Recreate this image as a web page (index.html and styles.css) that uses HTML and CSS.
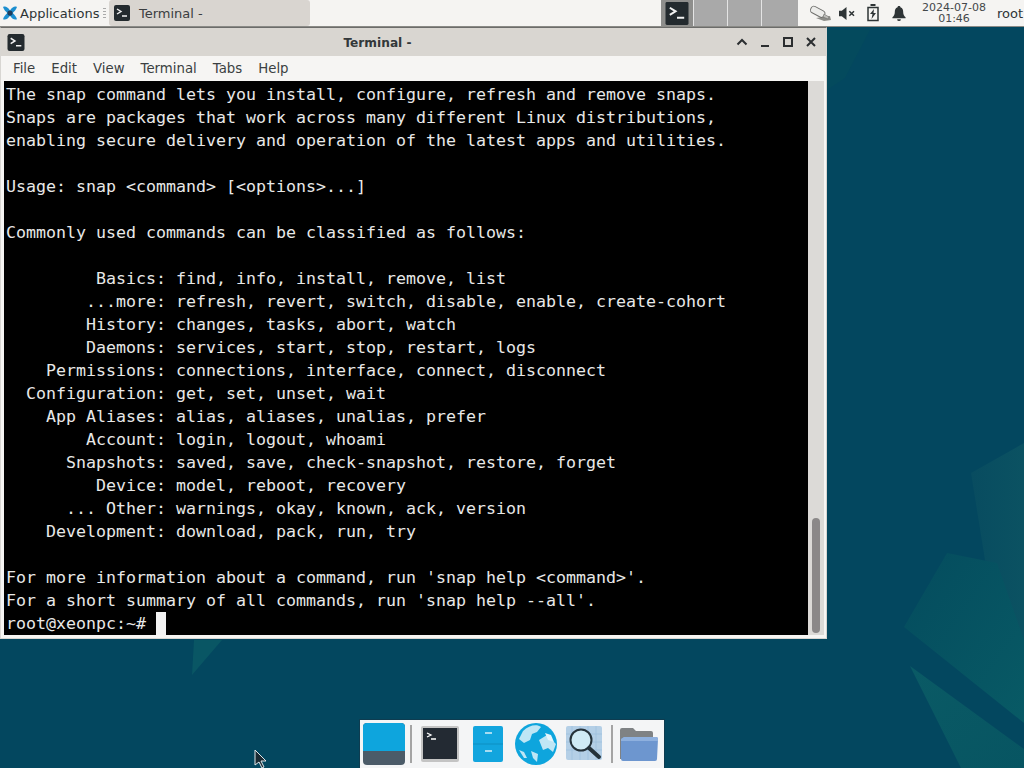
FILE: index.html
```html
<!DOCTYPE html>
<html lang="en">
<head>
<meta charset="utf-8">
<title>Terminal -</title>
<link rel="stylesheet" href="styles.css">
</head>
<body>
<div class="desktop">
  <svg class="wallpaper" viewBox="0 0 1024 768" aria-hidden="true">
    <defs>
      <linearGradient id="shade1" x1="0" y1="0" x2="1" y2="1"><stop offset="0" stop-color="#044c5e"/><stop offset="1" stop-color="#085a65"/></linearGradient>
      <linearGradient id="shade2" x1="0" y1="0" x2="1" y2="1"><stop offset="0" stop-color="#0a5a65"/><stop offset="1" stop-color="#075562"/></linearGradient>
      <linearGradient id="shade3" x1="0" y1="0" x2="1" y2="0"><stop offset="0" stop-color="#084c60"/><stop offset="1" stop-color="#0b5262"/></linearGradient>
    </defs>
    <polygon class="w3" points="971,473 1024,443 1024,640 985,560"/>
    <polygon class="w1" points="904,627 947,553 997,563 1024,640 1024,723"/>
    <polygon class="w2" points="910,666 1024,749 1024,768 961,768"/>
    <polygon class="w5" points="192,675 194,640 222,640"/>
    <polygon class="w4" points="827,30 870,30 845,78 827,90"/>
  </svg>

  <header class="panel">
    <div class="apps">
      <svg class="appicon" viewBox="0 0 16 16"><path class="x-blue" d="M0 1c3-1 5 0 8 4 3-4 5-5 8-4-1 3-3 5-5 7 2 2 4 4 5 7-3 1-5 0-8-4-3 4-5 5-8 4 1-3 3-5 5-7C3 6 1 4 0 1z"/><circle class="x-dark" cx="8" cy="8" r="3"/></svg>
      <span>Applications</span>
      <span class="grip"></span>
    </div>
    <div class="task">
      <svg class="termicon small" viewBox="0 0 16 16"><rect width="16" height="16" rx="2"/><path d="M3 4l4 2.500L3 9M8 11h5"/></svg>
      <span>Terminal -</span>
    </div>
    <div class="spacer"></div>
    <div class="pager">
      <div class="ws first"><svg class="termicon pagericon" viewBox="0 0 16 16"><rect width="16" height="16" rx="1"/><path d="M3 4l4 2.500L3 9M8 11h5"/></svg></div>
      <div class="ws"></div>
      <div class="ws"></div>
      <div class="ws"></div>
    </div>
    <div class="tray">
      <svg class="ti net" viewBox="0 0 24 20"><path class="net-s" d="M8 15l8 3 7-1-1-4z"/><rect class="net-f" x="2" y="5" width="15" height="7" rx="3" transform="rotate(28 9 9)"/><path class="net-p" d="M16 11l5 3-1 2-5-2z"/></svg>
      <svg class="ti mute" viewBox="0 0 18 16"><path d="M1 5h3l5-4v14l-5-4H1z"/><path class="cross" d="M12 5.500l5 5M17 5.500l-5 5"/></svg>
      <svg class="ti batt" viewBox="0 0 14 18"><path class="outline" d="M2 3.500h10v13H2z"/><path d="M4.500 0h5v2h-5zM8 5L4 10h2.500L5.500 15 10 9H7.500z"/></svg>
      <svg class="ti bell" viewBox="0 0 14 16"><path d="M7 0c1 0 1.500.6 1.500 1.300C11 2 11.500 4.500 11.500 7c0 2 .8 3.500 2.500 5v1H0v-1c1.700-1.500 2.500-3 2.500-5 0-2.500.5-5 3-5.700C5.500.6 6 0 7 0zM5 14h4a2 2 0 0 1-4 0z"/></svg>
      <div class="clock"><span>2024-07-08</span><span>01:46</span></div>
      <span class="user">root</span>
    </div>
  </header>

  <section class="window">
    <div class="titlebar">
      <svg class="termicon winicon" viewBox="0 0 16 16"><rect width="16" height="16" rx="2"/><path d="M3 4l4 2.500L3 9M8 11h5"/></svg>
      <div class="wintitle">Terminal -</div>
      <div class="winbtns">
        <svg viewBox="0 0 12 12"><path d="M1.500 8.500L6 4l4.500 4.500"/></svg>
        <svg viewBox="0 0 12 12"><path d="M2 10h8"/></svg>
        <svg viewBox="0 0 12 12"><path d="M2 2h8v8H2z"/></svg>
        <svg viewBox="0 0 12 12"><path d="M2 2l8 8M10 2l-8 8"/></svg>
      </div>
    </div>
    <nav class="menubar">
      <span>File</span><span>Edit</span><span>View</span><span>Terminal</span><span>Tabs</span><span>Help</span>
    </nav>
    <div class="termwrap">
<pre class="term">The snap command lets you install, configure, refresh and remove snaps.
Snaps are packages that work across many different Linux distributions,
enabling secure delivery and operation of the latest apps and utilities.

Usage: snap &lt;command&gt; [&lt;options&gt;...]

Commonly used commands can be classified as follows:

         Basics: find, info, install, remove, list
        ...more: refresh, revert, switch, disable, enable, create-cohort
        History: changes, tasks, abort, watch
        Daemons: services, start, stop, restart, logs
    Permissions: connections, interface, connect, disconnect
  Configuration: get, set, unset, wait
    App Aliases: alias, aliases, unalias, prefer
        Account: login, logout, whoami
      Snapshots: saved, save, check-snapshot, restore, forget
         Device: model, reboot, recovery
      ... Other: warnings, okay, known, ack, version
    Development: download, pack, run, try

For more information about a command, run 'snap help &lt;command&gt;'.
For a short summary of all commands, run 'snap help --all'.
root@xeonpc:~# <span class="cursor"> </span></pre>
      <div class="scrollbar"><div class="thumb"></div></div>
    </div>
  </section>

  <svg class="pointer" viewBox="0 0 14 20"><path d="M1 1v15l4-3 3 6 2-1-3-6h5z"/></svg>

  <footer class="dock">
    <svg class="d-show" viewBox="0 0 42 42"><rect width="42" height="42" rx="4" fill="#4b5b68"/><path d="M0 4a4 4 0 0 1 4-4h34a4 4 0 0 1 4 4v24H0z" fill="#0ea5dd"/></svg>
    <div class="dsep"></div>
    <svg class="d-term" viewBox="0 0 38 36"><rect width="38" height="36" rx="2" fill="#c4c4c4"/><rect x="2" y="2" width="34" height="31" fill="#232a33"/><path d="M6 7l4 2-4 2M10 13h5" fill="none" stroke="#fff" stroke-width="1.300"/></svg>
    <svg class="d-files" viewBox="0 0 30 36"><rect width="30" height="36" rx="2" fill="#12a5de"/><path d="M0 18h30" stroke="#0d8fc2"/><path d="M12 7h7M12 25h7" stroke="#d7eef8" stroke-width="1.400"/></svg>
    <svg class="d-globe" viewBox="0 0 42 42"><circle cx="21" cy="21" r="21" fill="#0ea5dd"/><path d="M8 8c6-6 14-7 18-4l-4 5-5 2-2 6-6 3-5-4zM24 17l8-5 9 9-3 8-5-4-5 2zM4 27l5 2 3 6-3 0zM16 28l7 3-1 8-4-4z" fill="#bfe6f5"/><path d="M30 10l6 2 3 7-6-2z" fill="#e6f6fc"/></svg>
    <svg class="d-search" viewBox="0 0 36 36"><rect width="36" height="34" rx="2" fill="#b4cfe6"/><path d="M6 0v34M14 0v34M22 0v34M30 0v34M0 8h36M0 16h36M0 24h36" stroke="#9fc0dd" stroke-width=".8"/><circle cx="15" cy="14" r="10.500" fill="#cfeaf5" stroke="#25323a" stroke-width="2"/><path d="M23 22l10 9" stroke="#25323a" stroke-width="4" stroke-linecap="round"/></svg>
    <div class="dsep second"></div>
    <svg class="d-folder" viewBox="0 0 38 34"><path d="M0 3a2 2 0 0 1 2-2h11l3 3h15a2 2 0 0 1 2 2v26H0z" fill="#7f8284"/><path d="M4 10h32a2 2 0 0 1 2 2l-1 20a2 2 0 0 1-2 2H3a2 2 0 0 1-2-2V12z" fill="#6d96cf"/><path d="M4 10h32a2 2 0 0 1 2 2v2H1v-2z" fill="#8eb0de"/></svg>
  </footer>
</div>
</body>
</html>
```
FILE: styles.css
```css
* { box-sizing: border-box; }
html, body { margin: 0; padding: 0; }
.desktop {
  position: relative;
  width: 1024px;
  height: 768px;
  overflow: hidden;
  background: #03475f;
  font-family: "DejaVu Sans", sans-serif;
  color: #2e3436;
}
.wallpaper { position: absolute; inset: 0; width: 1024px; height: 768px; }
.w1 { fill: url(#shade1); }
.w2 { fill: url(#shade2); }
.w3 { fill: url(#shade3); }
.w4 { fill: #044a5d; }
.w5 { fill: #095664; }

.panel {
  position: relative;
  display: flex;
  align-items: center;
  height: 27px;
  background: #f5f4f2;
  border-bottom: 1px solid #8a8a86;
  font-size: 13px;
}
.apps { display: flex; align-items: center; width: 109px; padding-left: 3px; }
.apps span:first-of-type { margin-left: 3px; }
.appicon { width: 14px; height: 14px; }
.x-blue { fill: #1c8fd0; }
.x-dark { fill: #1f3d5c; }
.grip {
  width: 3px;
  height: 11px;
  margin-left: 4px;
  background: repeating-linear-gradient(#aaa 0 1px, transparent 1px 3px);
}
.task {
  display: flex;
  align-items: center;
  gap: 9px;
  width: 201px;
  height: 26px;
  padding-left: 5px;
  background: #d9d5d0;
  border-radius: 3px;
  color: #3a3d3f;
}
.termicon rect { fill: #232a2e; }
.termicon path { fill: none; stroke: #f2f2f2; stroke-width: 1.400; }
.small { width: 16px; height: 16px; }
.spacer { flex: 1; }
.pager { display: flex; height: 26px; margin-right: 8px; }
.ws { width: 34px; background: #a9a9a9; border-right: 1px solid #e4e4e4; }
.ws:last-child { border-right: 0; width: 36px; }
.ws.first { width: 33px; display: flex; align-items: center; justify-content: center; background: #8e8e8c; }
.pagericon { width: 26px; height: 23px; }
.tray { display: flex; align-items: center; width: 218px; }
.ti { flex: none; }
.net { width: 24px; height: 20px; margin-left: 2px; }
.net-s { fill: #8c8c88; }
.net-f { fill: #ececea; stroke: #6e6e6c; stroke-width: .9; }
.net-p { fill: #bdbdba; stroke: #6e6e6c; stroke-width: .6; }
.mute { width: 17px; height: 15px; margin-left: 6px; fill: #2e3436; }
.cross { fill: none; stroke: #2e3436; stroke-width: 1.600; }
.batt { width: 14px; height: 18px; margin-left: 11px; fill: #2e3436; }
.outline { fill: none; stroke: #2e3436; stroke-width: 1.500; }
.bell { width: 14px; height: 15px; margin-left: 12px; fill: #2e3436; }
.clock {
  display: flex;
  flex-direction: column;
  align-items: center;
  flex: none;
  width: 64px;
  margin-left: 16px;
  font-size: 11px;
  line-height: 11px;
  white-space: nowrap;
  color: #44484a;
}
.user { margin-left: 11px; white-space: nowrap; }

.window {
  position: absolute;
  left: 0;
  top: 27px;
  width: 827px;
  height: 612px;
  background: #f6f5f3;
  border: 1px solid #d8d6d2;
  border-top-color: #6c6c6a;
  display: flex;
  flex-direction: column;
}
.titlebar {
  position: relative;
  display: flex;
  align-items: center;
  justify-content: space-between;
  flex: none;
  height: 28px;
  padding: 0 9px 0 6px;
  background: #d9d6d1;
}
.winicon { width: 18px; height: 17px; }
.wintitle {
  position: absolute;
  left: 0;
  right: 72px;
  padding-top: 1px;
  text-align: center;
  font-size: 12.200px;
  font-weight: bold;
  color: #33383a;
}
.winbtns { position: relative; display: flex; gap: 11px; }
.winbtns svg { width: 12px; height: 12px; fill: none; stroke: #2b2e30; stroke-width: 2; }
.menubar {
  display: flex;
  align-items: center;
  flex: none;
  gap: 16px;
  height: 25px;
  padding: 0 12px;
  font-size: 13.300px;
  color: #3b3f41;
}
.termwrap { display: flex; flex: 1; min-height: 0; padding: 0 2px 3px 3px; }
.term {
  flex: 1;
  margin: 0;
  padding: 2px 0 0 2px;
  background: #000;
  color: #e8e8e8;
  font-family: "DejaVu Sans Mono", monospace;
  font-size: 16.610px;
  line-height: 23px;
  overflow: hidden;
}
.cursor { display: inline-block; width: 10px; height: 23px; background: #f2f2f2; vertical-align: top; }
.scrollbar { position: relative; flex: none; width: 16px; margin-left: -1px; background: #dcdad7; }
.thumb {
  position: absolute;
  left: 4px;
  right: 4px;
  bottom: 2px;
  height: 115px;
  border-radius: 4px;
  background: #8b8888;
}
.pointer { position: absolute; left: 254px; top: 749px; width: 14px; height: 20px; fill: #1b2a33; stroke: #dfe5e8; stroke-width: 1; }

.dock {
  position: absolute;
  left: 359px;
  top: 719px;
  width: 306px;
  height: 49px;
  display: flex;
  align-items: center;
  padding: 0 0 0 3px;
  background: #f4f5f6;
  border: 1px solid #0e3c50;
  border-bottom: 0;
}
.dsep { width: 2px; height: 38px; margin: 0 9px 0 5px; background: #a4a4a4; }
.dsep.second { margin: 0 7px 0 9px; }
.d-show { width: 42px; height: 42px; }
.d-term { width: 38px; height: 36px; }
.d-files { width: 30px; height: 36px; margin-left: 14px; }
.d-globe { width: 42px; height: 42px; margin-left: 12px; }
.d-search { width: 36px; height: 36px; margin-left: 9px; }
.d-folder { width: 38px; height: 34px; }
```
